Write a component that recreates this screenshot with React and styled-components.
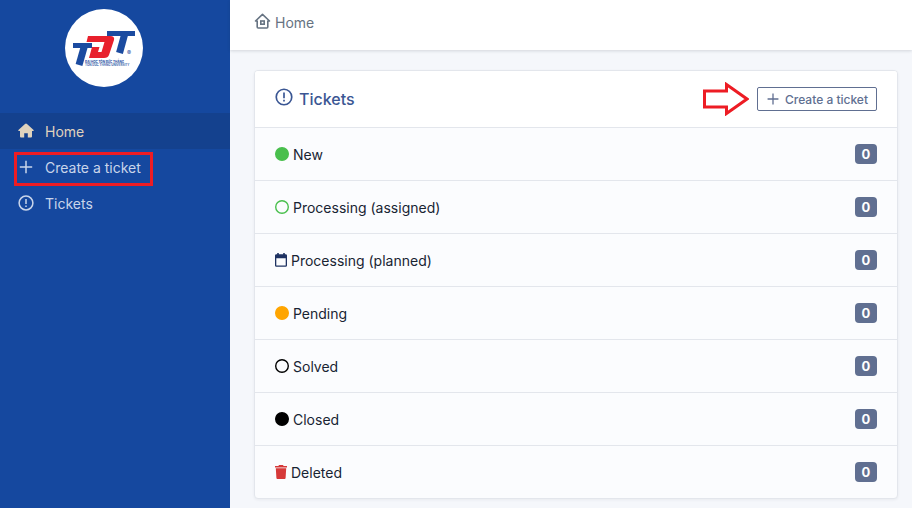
import styled, { createGlobalStyle } from 'styled-components'

const GlobalStyle = createGlobalStyle`
  * {
    box-sizing: border-box;
  }

  body {
    margin: 0;
    background: #f5f7fb;
    color: #182433;
    font-family: Inter, 'Liberation Sans', sans-serif;
    font-size: 14px;
    line-height: 20px;
  }
`

const Page = styled.div`
  display: flex;
  min-height: 100vh;
`

const Sidebar = styled.aside`
  flex: 0 0 230px;
  background: #15489f;
`

const Brand = styled.a`
  display: flex;
  justify-content: center;
  padding: 8px 22px 25px 0;
`

const Nav = styled.nav`
  display: flex;
  flex-direction: column;
`

const NavLink = styled.a`
  position: relative;
  display: flex;
  align-items: center;
  gap: 11px;
  height: 36px;
  padding: 0 18px;
  background: ${props => (props.$active ? '#14418e' : 'transparent')};
  color: ${props => (props.$active ? '#e0d3bd' : '#c9d5ea')};
  text-decoration: none;
`

// text sits slightly below the icon's centre
const Label = styled.span`
  padding-top: 2px;
`

// red frame drawn over the highlighted link
const Frame = styled.span`
  position: absolute;
  top: 3px;
  left: 14px;
  width: 139px;
  height: 34px;
  border: 3px solid #ed1c24;
  pointer-events: none;
`

const Main = styled.div`
  flex: 1;
  min-width: 0;
`

const Topbar = styled.header`
  display: flex;
  align-items: center;
  height: 50px;
  padding: 0 24px;
  background: #fff;
  box-shadow: 0 1px 3px rgba(30, 41, 59, 0.16);
`

const Crumb = styled.a`
  display: flex;
  align-items: center;
  gap: 4px;
  margin-bottom: 6px;
  color: #667382;
  text-decoration: none;

  svg {
    margin-bottom: 2px;
  }
`

const Content = styled.main`
  padding: 20px 14px 9px 24px;
`

const Card = styled.section`
  background: #fbfcfe;
  border: 1px solid #e3e6ec;
  border-radius: 4px;
  box-shadow: 0 1px 3px rgba(30, 41, 59, 0.06);
  overflow: hidden;
`

const CardHeader = styled.div`
  display: flex;
  align-items: center;
  height: 56px;
  padding: 0 20px;
  background: #fff;
`

const Title = styled.h2`
  display: flex;
  align-items: center;
  gap: 6px;
  flex: 1;
  margin: 0;
  color: #3a5693;
  font-size: 16px;
  font-weight: 500;
  line-height: 24px;

  svg {
    margin-bottom: 4px;
  }
`

const CreateButton = styled.button`
  display: flex;
  align-items: center;
  gap: 5px;
  height: 24px;
  margin-left: 8px;
  padding: 1px 8px 0;
  background: #fff;
  border: 1px solid #606f91;
  border-radius: 2px;
  color: #606f91;
  font: 500 12px/20px Inter, 'Liberation Sans', sans-serif;

  svg {
    margin-bottom: 2px;
  }
`

const List = styled.ul`
  margin: 0;
  padding: 0;
  list-style: none;
`

const Row = styled.li`
  display: flex;
  align-items: center;
  gap: 4px;
  height: 53px;
  padding: 0 20px;
  border-top: 1px solid #e3e6ec;
`

const Badge = styled.span`
  display: flex;
  align-items: center;
  justify-content: center;
  width: 22px;
  height: 20px;
  margin-left: auto;
  background: #606f91;
  border-radius: 4px;
  color: #fff;
  font-size: 13px;
  font-weight: 700;
`

const Logo = () => (
  <svg width="80" height="80" viewBox="0 0 80 80" role="img" aria-label="TDT">
    <circle cx="40" cy="40" r="39" fill="#fff" />
    <g fill="none" stroke="#1b4ba0" strokeWidth="5">
      <path d="M9 37.5H28" />
      <path d="M21 36L15 57" strokeWidth="7" />
      <path d="M43 25.5H71" />
      <path d="M61 25L55.5 45" strokeWidth="7" />
    </g>
    <path
      d="M24 28H46Q51 28 50 32L45 47Q44 50 40 50H25L28 39H35.5L34 44H37.5L40.5 34H22.5Z"
      fill="#e8202c"
    />
    <g fill="#1b4ba0" fontFamily="Inter, 'Liberation Sans', sans-serif">
      <text x="63" y="47" fontSize="6">®</text>
      <text x="21" y="55" fontSize="3" fontWeight="700">ĐẠI HỌC TÔN ĐỨC THẮNG</text>
      <text x="21" y="58" fontSize="3" fontWeight="600">TON DUC THANG UNIVERSITY</text>
    </g>
  </svg>
)

const Dot = ({ color, hollow }) => (
  <svg width="14" height="14" viewBox="0 0 14 14">
    <circle cx="7" cy="7" r="6.3" fill={hollow ? 'none' : color} stroke={color} strokeWidth="1.4" />
  </svg>
)

const HomeIcon = () => (
  <svg width="16" height="16" viewBox="0 0 16 16" fill="currentColor">
    <path d="M8 0.5Q8.5 0.5 9 1L15.6 6.9Q16.2 8 15.2 8H14V13.5Q14 14.5 13 14.5H9.8V10.2H6.2V14.5H3Q2 14.5 2 13.5V8H0.8Q-0.2 8 0.4 6.9L7 1Q7.5 0.5 8 0.5Z" />
  </svg>
)

const HomeOutlineIcon = () => (
  <svg width="17" height="17" viewBox="0 0 17 17" fill="none" stroke="currentColor" strokeWidth="1.6">
    <path d="M3.2 8H1.5L8.5 1.4 15.5 8H13.8V14Q13.8 15 12.8 15H4.2Q3.2 15 3.2 14Z" strokeLinejoin="round" />
    <rect x="6.8" y="8" width="3.4" height="3.2" />
  </svg>
)

const PlusIcon = ({ size = 16 }) => (
  <svg width={size} height={size} viewBox="0 0 16 16" stroke="currentColor" strokeWidth="1.5">
    <path d="M8 1.8V14.2M1.8 8H14.2" />
  </svg>
)

const AlertIcon = ({ size = 16 }) => (
  <svg width={size} height={size} viewBox="0 0 16 16" fill="none" stroke="currentColor" strokeWidth="1.5">
    <circle cx="8" cy="8" r="6.9" />
    <path d="M8 4V9M8 10.5V12" />
  </svg>
)

const CalendarIcon = () => (
  <svg width="12" height="14" viewBox="0 0 12 14" fill="#1e3262">
    <path d="M2.2 0H3.8V1.2H8.2V0H9.8V1.2H10.6Q12 1.2 12 2.6V12.4Q12 13.8 10.6 13.8H1.4Q0 13.8 0 12.4V2.6Q0 1.2 1.4 1.2H2.2ZM1.3 5.2V12.5H10.7V5.2Z" fillRule="evenodd" />
  </svg>
)

const TrashIcon = () => (
  <svg width="12" height="14" viewBox="0 0 12 14" fill="#d63939">
    <path d="M0 1H3.4L4 0H8L8.6 1H12V2.4H0ZM0.8 3.2H11.2L10.6 13Q10.5 14 9.6 14H2.4Q1.5 14 1.4 13Z" />
  </svg>
)

const Arrow = () => (
  <svg width="46" height="34" viewBox="0 0 46 34" fill="#fff" stroke="#ed1c24" strokeWidth="3">
    <path d="M1.5 9H23.5V2.5L44 17 23.5 31.5V25H1.5Z" />
  </svg>
)

const statuses = [
  { label: 'New', icon: <Dot color="#49bf4d" />, count: 0 },
  { label: 'Processing (assigned)', icon: <Dot color="#49bf4d" hollow />, count: 0 },
  { label: 'Processing (planned)', icon: <CalendarIcon />, count: 0 },
  { label: 'Pending', icon: <Dot color="#ffa500" />, count: 0 },
  { label: 'Solved', icon: <Dot color="#000" hollow />, count: 0 },
  { label: 'Closed', icon: <Dot color="#000" />, count: 0 },
  { label: 'Deleted', icon: <TrashIcon />, count: 0 },
]

const App = () => {
  return (
    <Page>
      <GlobalStyle />
      <Sidebar>
        <Brand href="#"><Logo /></Brand>
        <Nav>
          <NavLink href="#" $active><HomeIcon /><Label>Home</Label></NavLink>
          <NavLink href="#create"><PlusIcon /><Label>Create a ticket</Label><Frame /></NavLink>
          <NavLink href="#tickets"><AlertIcon /><Label>Tickets</Label></NavLink>
        </Nav>
      </Sidebar>
      <Main>
        <Topbar>
          <Crumb href="#"><HomeOutlineIcon /><Label>Home</Label></Crumb>
        </Topbar>
        <Content>
          <Card>
            <CardHeader>
              <Title><AlertIcon size={18} /> Tickets</Title>
              <Arrow />
              <CreateButton type="button"><PlusIcon size={14} /> Create a ticket</CreateButton>
            </CardHeader>
            <List>
              {statuses.map(({ label, icon, count }) => (
                <Row key={label}>
                  {icon}
                  <Label>{label}</Label>
                  <Badge>{count}</Badge>
                </Row>
              ))}
            </List>
          </Card>
        </Content>
      </Main>
    </Page>
  )
}

export default App
